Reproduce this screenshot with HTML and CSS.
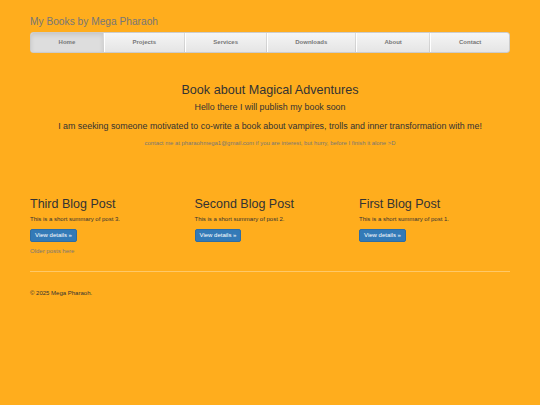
FILE: index.html
```html
<!DOCTYPE html>
<html lang="en">
<head>
    <meta charset="UTF-8">
    <meta name="viewport" content="width=device-width, initial-scale=1.0">
    <title>My Books by Mega Pharaoh</title>
    <link rel="stylesheet" href="styles.css">
</head>
<body>

    <div class="container">

        <!-- Header with site title and navigation -->
        <div class="masthead">
            <h3 class="site-title">My Books by Mega Pharaoh</h3>
            <nav>
                <ul class="nav-justified">
                    <li class="active"><a href="#">Home</a></li>
                    <li><a href="#">Projects</a></li>
                    <li><a href="#">Services</a></li>
                    <li><a href="#">Downloads</a></li>
                    <li><a href="#">About</a></li>
                    <li><a href="#">Contact</a></li>
                </ul>
            </nav>
        </div>

        <!-- Intro -->
        <div class="jumbotron">
            <h1>Book about Magical Adventures</h1>
            <p class="lead">Hello there I will publish my book soon</p>
            <p class="lead">I am seeking someone motivated to co-write a book about vampires, trolls and inner transformation with me!</p>
            <p class="contact">contact me at pharaohmega1@gmail.com if you are interest, but hurry, before I finish it alone &gt;D</p>
        </div>

        <!-- Blog posts -->
        <div class="row">
            <div class="col">
                <h2>Third Blog Post</h2>
                <p>This is a short summary of post 3.</p>
                <p class="btn-line"><a class="btn" href="#">View details &raquo;</a></p>
                <p><a class="older" href="#">Older posts here</a></p>
            </div>
            <div class="col">
                <h2>Second Blog Post</h2>
                <p>This is a short summary of post 2.</p>
                <p class="btn-line"><a class="btn" href="#">View details &raquo;</a></p>
            </div>
            <div class="col">
                <h2>First Blog Post</h2>
                <p>This is a short summary of post 1.</p>
                <p class="btn-line"><a class="btn" href="#">View details &raquo;</a></p>
            </div>
        </div>

        <!-- Footer -->
        <footer class="footer">
            <p>&copy; 2025 Mega Pharaoh.</p>
        </footer>

    </div>

</body>
</html>
```

FILE: styles.css
```css
* {
    margin: 0;
    padding: 0;
    box-sizing: border-box;
}

body {
    background-color: #ffad1d;
    font-family: "Liberation Sans", Arial, sans-serif;
    font-size: 6px;
    line-height: 1.45;
    color: #333;
}

a {
    color: #337ab7;
    text-decoration: none;
}

.container {
    width: 480px;
    margin: 0 auto;
    padding-top: 16px;
}

/* Masthead */
.site-title {
    font-size: 10.2px;
    font-weight: normal;
    color: #777;
    line-height: 1.1;
    margin-bottom: 4.5px;
}

.nav-justified {
    list-style: none;
    display: flex;
    height: 21px;
    border: 1px solid #ccc;
    border-radius: 3px;
    overflow: hidden;
    background: linear-gradient(to bottom, #f5f5f5 0%, #e5e5e5 100%);
}

.nav-justified li {
    flex: 1 1 auto;
    border-left: 1px solid #fff;
    border-right: 1px solid rgba(0, 0, 0, 0.1);
}

.nav-justified li:first-child {
    border-left: 0;
}

.nav-justified li:last-child {
    border-right: 0;
}

.nav-justified a {
    display: flex;
    height: 100%;
    align-items: center;
    justify-content: center;
    font-size: 6px;
    font-weight: bold;
    color: #777;
}

.nav-justified .active a {
    background-color: #ddd;
    background-image: none;
    box-shadow: inset 0 2px 4px rgba(0, 0, 0, 0.1);
}

/* Intro */
.jumbotron {
    text-align: center;
    padding-top: 31px;
    padding-bottom: 51px;
}

.jumbotron h1 {
    font-size: 12.6px;
    font-weight: normal;
    line-height: 1.1;
    margin-bottom: 3.5px;
}

.jumbotron .lead {
    font-size: 8.9px;
    margin-bottom: 6px;
}

.jumbotron .contact {
    font-size: 5.9px;
    color: #777;
}

/* Blog columns */
.row {
    display: grid;
    grid-template-columns: repeat(3, 164.5px);
}

.col h2 {
    font-size: 12.5px;
    font-weight: normal;
    line-height: 1.1;
    margin-bottom: 3px;
}

.col p {
    margin-bottom: 4px;
}

.col .btn-line {
    line-height: 13px;
    margin-top: 5px;
    margin-bottom: 5px;
}

.btn {
    display: inline-block;
    vertical-align: top;
    padding: 0 4px;
    line-height: 11px;
    font-size: 6px;
    color: #fff;
    background-color: #337ab7;
    border: 1px solid #2e6da4;
    border-radius: 2px;
}

.older {
    font-size: 6px;
    color: #777;
}

/* Footer */
.footer {
    margin-top: 11px;
    border-top: 1px solid #ffc867;
    padding-top: 17px;
}
```
